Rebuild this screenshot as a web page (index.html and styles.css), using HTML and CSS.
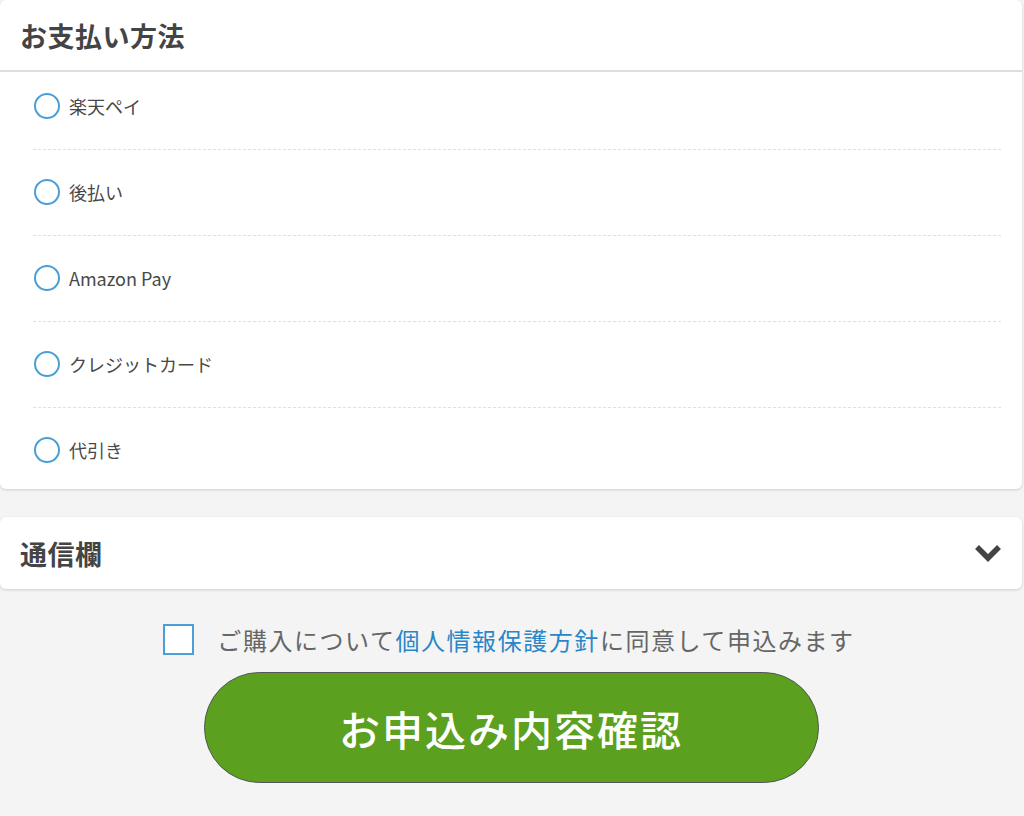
FILE: index.html
```html
<!DOCTYPE html>
<html lang="ja">
<head>
    <meta charset="UTF-8">
    <meta name="viewport" content="width=device-width, initial-scale=1.0">
    <title>お支払い方法</title>
    <link rel="stylesheet" href="styles.css">
</head>
<body>
    <div class="page">
        <div class="card">
            <div class="card-header">
                <h2>お支払い方法</h2>
            </div>
            <ul class="options">
                <li><span class="radio"></span>楽天ペイ</li>
                <li><span class="radio"></span>後払い</li>
                <li><span class="radio"></span>Amazon Pay</li>
                <li><span class="radio"></span>クレジットカード</li>
                <li><span class="radio"></span>代引き</li>
            </ul>
        </div>

        <div class="card card-closed">
            <div class="card-header">
                <h2>通信欄</h2>
                <svg class="chevron" width="28" height="20" viewBox="0 0 28 20">
                    <polyline points="3,4 14,15 25,4" fill="none" stroke="#444" stroke-width="5.5"/>
                </svg>
            </div>
        </div>

        <div class="agree">
            <span class="checkbox"></span>
            <p>ご購入について<a href="#">個人情報保護方針</a>に同意して申込みます</p>
        </div>

        <button class="submit">お申込み内容確認</button>
    </div>
</body>
</html>
```

FILE: styles.css
```css
body {
    margin: 0;
    background-color: #f4f4f4;
    font-family: "Noto Sans CJK JP", "Noto Sans", sans-serif;
    color: #444;
}

.page {
    width: 1022px;
    display: flex;
    flex-direction: column;
    align-items: center;
}

.card {
    width: 100%;
    background-color: #fff;
    border-radius: 6px;
    box-shadow: 0 1px 3px rgba(0, 0, 0, 0.16);
}

.card-closed {
    margin-top: 28px;
}

.card-header {
    height: 72px;
    padding: 0 20px 0 20px;
    display: flex;
    align-items: center;
    justify-content: space-between;
    box-sizing: border-box;
}

.card-header h2 {
    margin: 0;
    font-size: 27px;
    font-weight: bold;
    letter-spacing: 0.5px;
    color: #444;
}

.card > .card-header:not(:last-child) {
    border-bottom: 2px solid #dedede;
}

.options {
    list-style: none;
    margin: 0;
    padding: 0 21px 0 33px;
}

.options li {
    display: flex;
    align-items: center;
    gap: 9px;
    height: 26px;
    padding: 29.5px 0 29.5px 1px;
    font-size: 18px;
    line-height: 26px;
    color: #484848;
    border-bottom: 1px dashed #e0e0e0;
}

.options li:first-child {
    padding-top: 21px;
}

.options li:last-child {
    padding-bottom: 26px;
    border-bottom: none;
}

.radio {
    width: 22px;
    height: 22px;
    border: 2px solid #4a9fd6;
    border-radius: 50%;
    flex-shrink: 0;
}

.agree {
    margin-top: 33px;
    display: flex;
    align-items: center;
    gap: 23px;
    margin-left: -4px;
}

.checkbox {
    width: 27px;
    height: 27px;
    border: 2px solid #4a9fd6;
    background-color: #fff;
}

.agree p {
    margin: 0;
    font-size: 24px;
    letter-spacing: 1.55px;
    color: #666;
}

.agree a {
    color: #2a86c8;
    text-decoration: none;
}

.submit {
    margin-top: 15px;
    width: 615px;
    height: 111px;
    border: 1px solid #555;
    border-radius: 56px;
    background-color: #5ba01f;
    color: #fff;
    font-family: "Noto Sans CJK JP", sans-serif;
    font-size: 41px;
    font-weight: 500;
    letter-spacing: 2px;
    cursor: pointer;
}
```
